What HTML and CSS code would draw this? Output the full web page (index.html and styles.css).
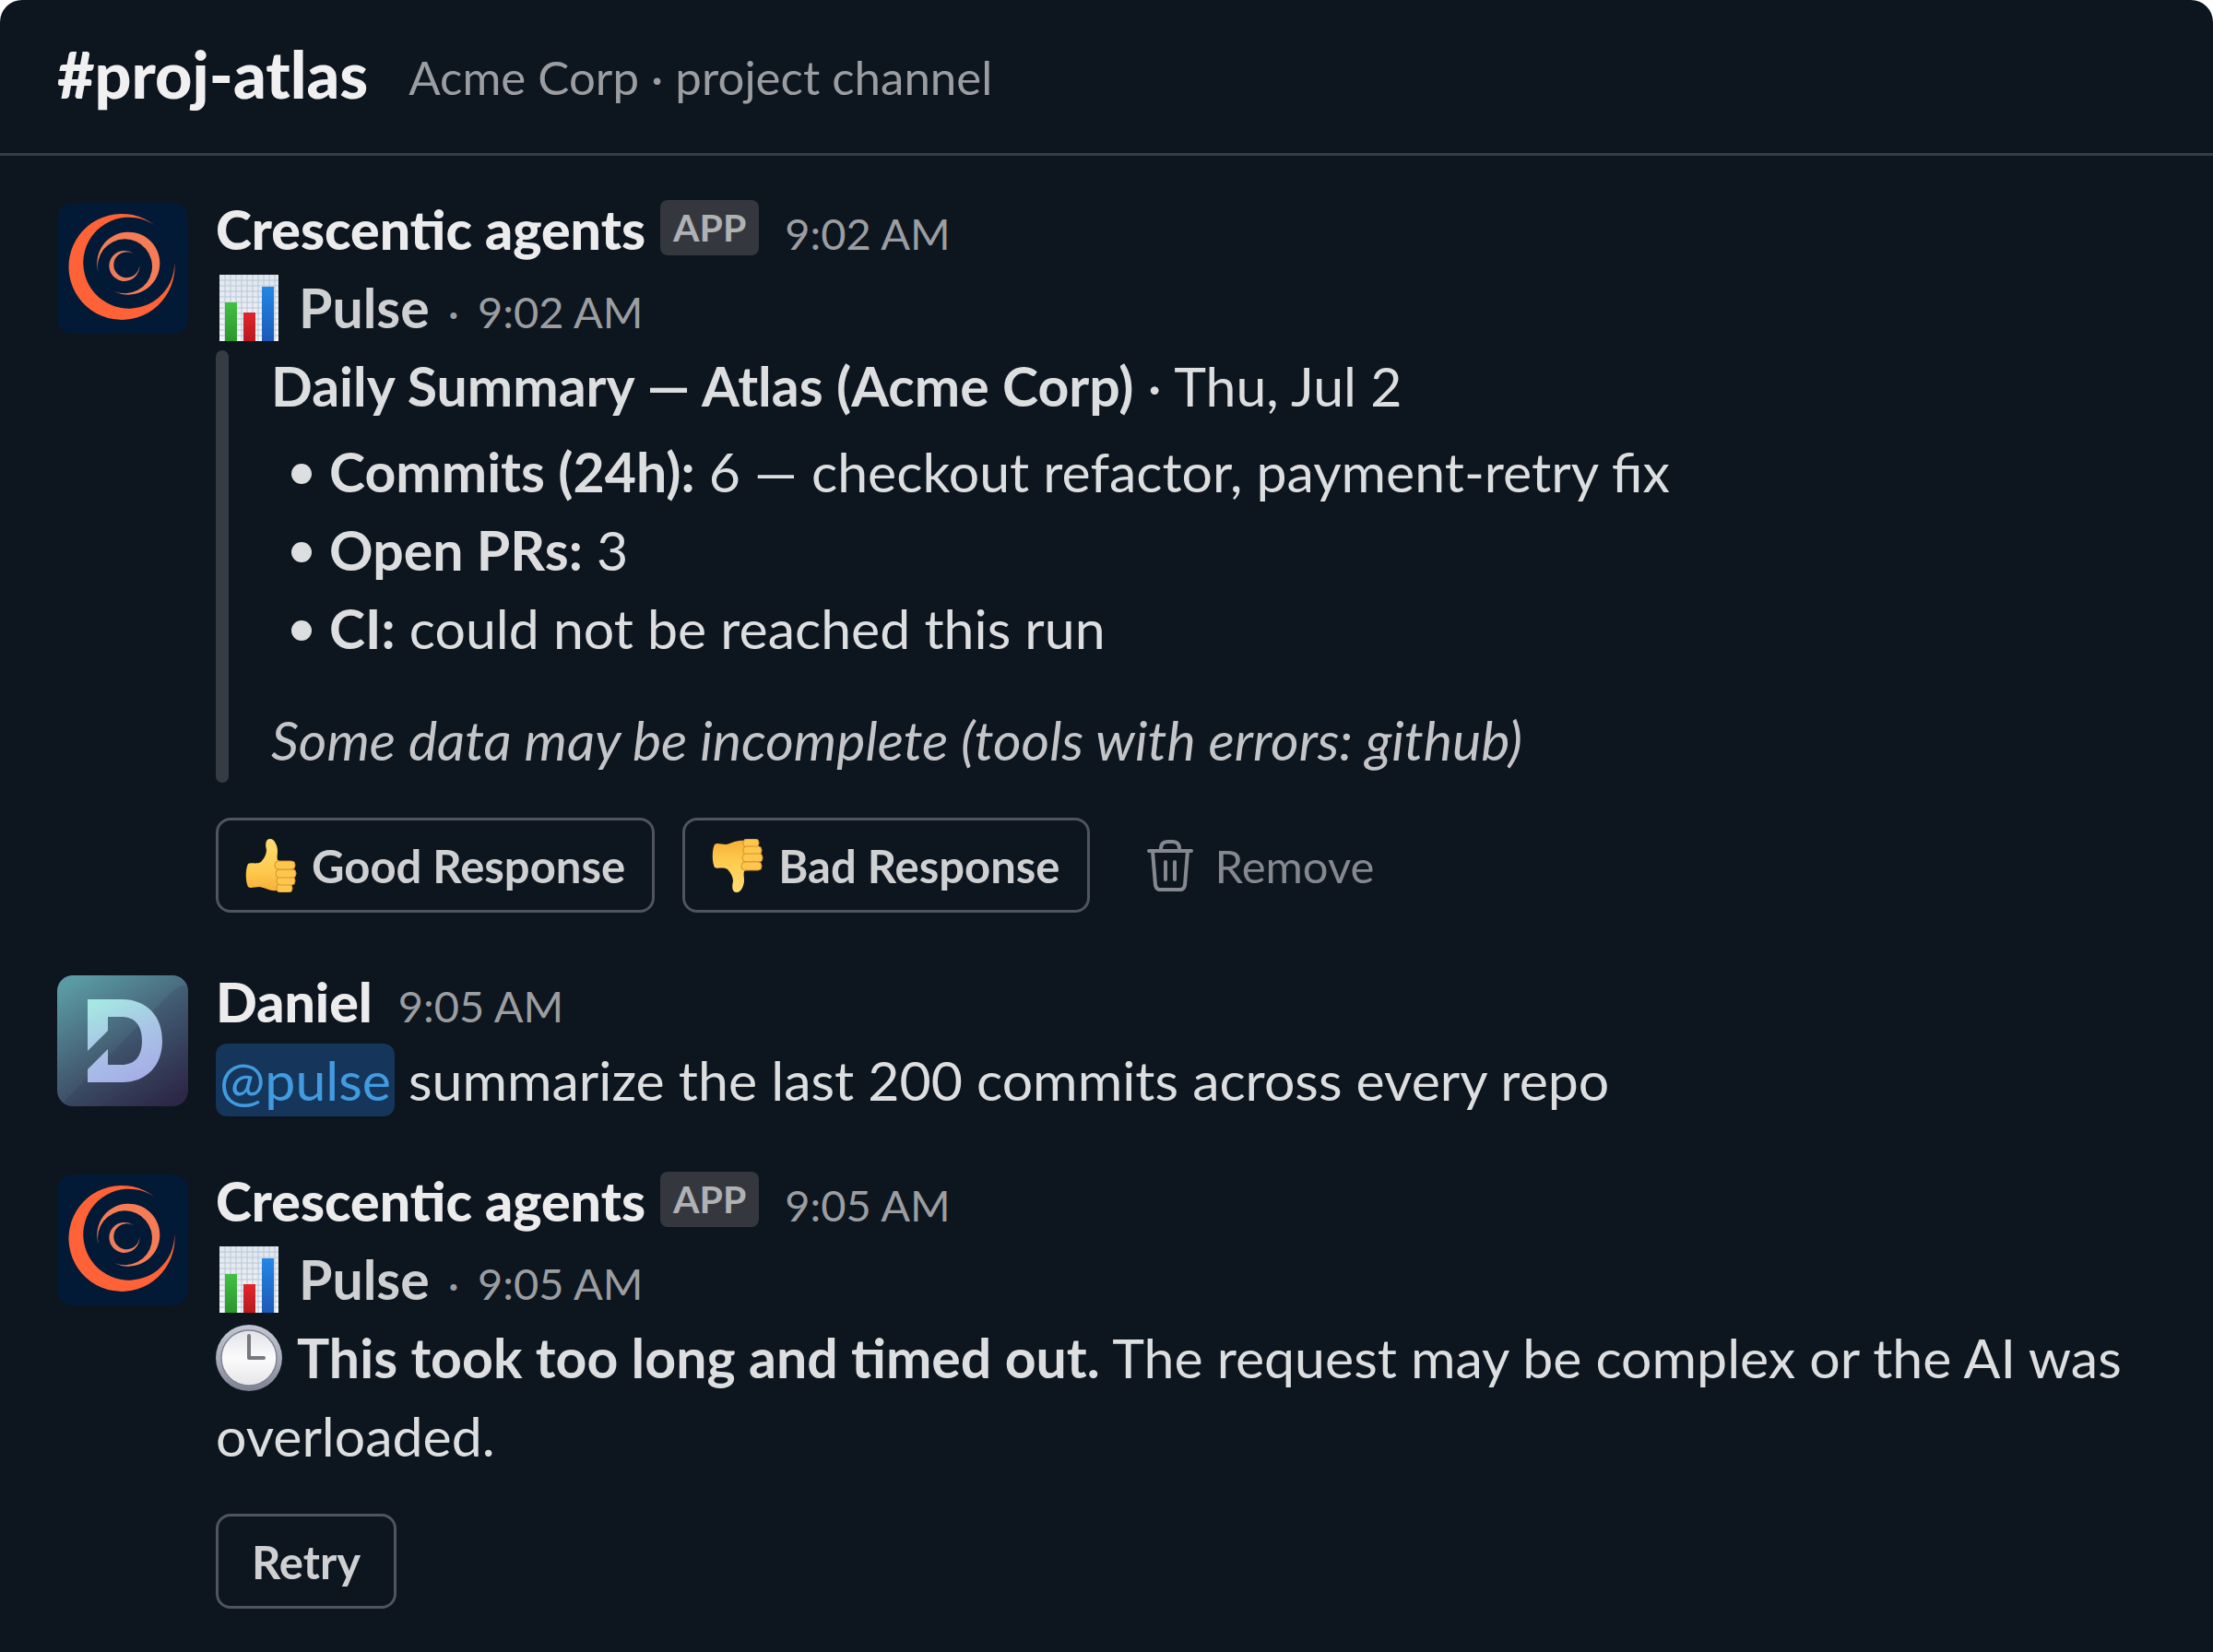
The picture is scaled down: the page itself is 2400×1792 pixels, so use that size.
FILE: index.html
```
<!DOCTYPE html>
<html lang="en">
<head>
    <meta charset="UTF-8">
    <meta name="viewport" content="width=device-width, initial-scale=1.0">
    <title>#proj-atlas</title>
    <link rel="stylesheet" href="styles.css">
</head>
<body>

<!-- Shared icons -->
<svg class="sprite" aria-hidden="true">
    <defs>
        <linearGradient id="boardFill" x1="0" y1="0" x2="0" y2="1">
            <stop offset="0" stop-color="#dfe6ee"/>
            <stop offset="1" stop-color="#f4f7fa"/>
        </linearGradient>
        <linearGradient id="greenBar" x1="0" y1="0" x2="0" y2="1">
            <stop offset="0" stop-color="#43c043"/>
            <stop offset="1" stop-color="#2b962d"/>
        </linearGradient>
        <linearGradient id="redBar" x1="0" y1="0" x2="0" y2="1">
            <stop offset="0" stop-color="#e0252b"/>
            <stop offset="1" stop-color="#b81a20"/>
        </linearGradient>
        <linearGradient id="blueBar" x1="0" y1="0" x2="0" y2="1">
            <stop offset="0" stop-color="#2487e6"/>
            <stop offset="1" stop-color="#1c5ab8"/>
        </linearGradient>
        <linearGradient id="thumbFill" x1="0" y1="0" x2="0" y2="1">
            <stop offset="0" stop-color="#ffdc72"/>
            <stop offset="0.6" stop-color="#fecb4f"/>
            <stop offset="1" stop-color="#f7b038"/>
        </linearGradient>
        <linearGradient id="clockRim" x1="0" y1="0" x2="0" y2="1">
            <stop offset="0" stop-color="#c3c6d2"/>
            <stop offset="0.5" stop-color="#a9acbb"/>
            <stop offset="1" stop-color="#7d8092"/>
        </linearGradient>
        <linearGradient id="clockFace" x1="0" y1="0" x2="0" y2="1">
            <stop offset="0" stop-color="#e2e3e8"/>
            <stop offset="0.5" stop-color="#fbfbfc"/>
            <stop offset="1" stop-color="#e6e6ea"/>
        </linearGradient>
    </defs>

    <symbol id="swirl" viewBox="0 0 142 142">
        <rect width="142" height="142" rx="16" fill="#021a35"/>
        <path fill="#fe6236" d="M105.3 24A57.5 57.5 0 1 0 127.3 64.7A49.5 49.5 0 1 1 105.3 24Z"/>
        <path fill="#f67c56" d="M44.7 75.3A34 34 0 1 1 62 96A29.5 29.5 0 1 0 44.7 75.3Z"/>
        <path fill="#ee7c5c" d="M84 56.3A16.5 16.5 0 1 0 89.3 67A14 14 0 1 1 84 56.3Z"/>
    </symbol>

    <symbol id="chart" viewBox="0 0 64 72">
        <rect width="64" height="72" fill="url(#boardFill)"/>
        <path d="M0 6H64M0 12H64M0 18H64M0 24H64M0 30H64M0 36H64M0 42H64M0 48H64M0 54H64M0 60H64M0 66H64M6 0V72M12 0V72M18 0V72M24 0V72M30 0V72M36 0V72M42 0V72M48 0V72M54 0V72M60 0V72" stroke="#b9c6d4" stroke-width="1"/>
        <rect x="6" y="30" width="13" height="42" fill="url(#greenBar)"/>
        <rect x="26" y="41" width="13" height="31" fill="url(#redBar)"/>
        <rect x="46" y="13" width="13" height="59" fill="url(#blueBar)"/>
    </symbol>

    <symbol id="thumb" viewBox="0 0 56 58">
        <path fill="url(#thumbFill)" d="M3 27C6 25 12 28 17 25C21 21 23 16 23 12C22 8 21 0 27 0C32 0 35 8 35 13C35 17 34 20 35 23L42 26V56H34C26 57 20 52 15 52C10 52 6 54 3 52C0 46 0 33 3 27Z"/>
        <g fill="#fdc64c" stroke="#d9912a" stroke-width="1">
            <rect x="34" y="49" width="17" height="9" rx="4"/>
            <rect x="34" y="41" width="20" height="9" rx="4"/>
            <rect x="33" y="33" width="22" height="9" rx="4"/>
            <rect x="32" y="24" width="22" height="9" rx="4"/>
        </g>
    </symbol>

    <symbol id="clock" viewBox="0 0 72 72">
        <circle cx="36" cy="36" r="36" fill="url(#clockRim)"/>
        <circle cx="36" cy="36" r="30" fill="url(#clockFace)" stroke="#80838f" stroke-width="1.5"/>
        <path d="M36 12V36H52" fill="none" stroke="#77787f" stroke-width="4" stroke-linecap="round" stroke-linejoin="round"/>
    </symbol>
</svg>

<div class="window">
    <header class="channel-header">
        <h1>#proj-atlas</h1>
        <p>Acme Corp · project channel</p>
    </header>

    <main class="messages">
        <article class="message">
            <svg class="avatar" role="img" aria-label="Crescentic agents"><use href="#swirl"/></svg>
            <div class="message-body">
                <div class="message-head">
                    <strong class="author">Crescentic agents</strong>
                    <span class="app-badge">APP</span>
                    <time class="time">9:02 AM</time>
                </div>
                <div class="agent">
                    <svg class="emoji-chart" role="img" aria-label="Bar chart"><use href="#chart"/></svg>
                    <strong>Pulse</strong>
                    <span class="agent-time">· <time>9:02 AM</time></span>
                </div>
                <div class="quote">
                    <p><strong>Daily Summary — Atlas (Acme Corp)</strong> · Thu, Jul 2</p>
                    <ul>
                        <li><strong>Commits (24h):</strong> 6 — checkout refactor, payment-retry fix</li>
                        <li><strong>Open PRs:</strong> 3</li>
                        <li><strong>CI:</strong> could not be reached this run</li>
                    </ul>
                    <p class="note">Some data may be incomplete (tools with errors: github)</p>
                </div>
                <div class="actions">
                    <button class="btn" type="button"><svg class="emoji-thumb" aria-hidden="true"><use href="#thumb"/></svg>Good Response</button>
                    <button class="btn" type="button"><svg class="emoji-thumb down" aria-hidden="true"><use href="#thumb"/></svg>Bad Response</button>
                    <button class="btn-plain" type="button">
                        <svg class="trash" viewBox="0 0 50 56" aria-hidden="true">
                            <path d="M2 12H48M15 12V10Q15 2 22 2H28Q35 2 35 10V12M6 12L9 49Q10 54 14 54H36Q40 54 41 49L44 12M20 24V43M30 24V43"/>
                        </svg>Remove
                    </button>
                </div>
            </div>
        </article>

        <article class="message">
            <svg class="avatar" viewBox="0 0 142 142" role="img" aria-label="Daniel">
                <defs>
                    <linearGradient id="tile" x1="0.2" y1="0" x2="0.8" y2="1">
                        <stop offset="0" stop-color="#5a9aa3"/>
                        <stop offset="0.5" stop-color="#455f75"/>
                        <stop offset="1" stop-color="#2f2a48"/>
                    </linearGradient>
                    <linearGradient id="mark" x1="0.2" y1="0" x2="0.6" y2="1">
                        <stop offset="0" stop-color="#a5e8e2"/>
                        <stop offset="0.5" stop-color="#a9c4e6"/>
                        <stop offset="1" stop-color="#a5aee6"/>
                    </linearGradient>
                </defs>
                <rect width="142" height="142" rx="17" fill="url(#tile)"/>
                <path d="M8 136L124 18Q142 4 142 17V125Q142 142 125 142H17Q10 142 8 136Z" fill="#1f2140" opacity="0.15"/>
                <path fill="url(#mark)" d="M33 26H70C98 26 114 45 114 71C114 97 98 116 70 116H33V102L55 80V97H70C84 97 92 88 92 71C92 54 84 45 70 45H55V60L33 82Z"/>
            </svg>
            <div class="message-body">
                <div class="message-head">
                    <strong class="author">Daniel</strong>
                    <time class="time">9:05 AM</time>
                </div>
                <p><a class="mention" href="#">@pulse</a> summarize the last 200 commits across every repo</p>
            </div>
        </article>

        <article class="message">
            <svg class="avatar" role="img" aria-label="Crescentic agents"><use href="#swirl"/></svg>
            <div class="message-body">
                <div class="message-head">
                    <strong class="author">Crescentic agents</strong>
                    <span class="app-badge">APP</span>
                    <time class="time">9:05 AM</time>
                </div>
                <div class="agent">
                    <svg class="emoji-chart" role="img" aria-label="Bar chart"><use href="#chart"/></svg>
                    <strong>Pulse</strong>
                    <span class="agent-time">· <time>9:05 AM</time></span>
                </div>
                <p><svg class="emoji-clock" role="img" aria-label="Clock"><use href="#clock"/></svg><strong>This took too long and timed out.</strong> The request may be complex or the AI was overloaded.</p>
                <div class="actions">
                    <button class="btn btn-retry" type="button">Retry</button>
                </div>
            </div>
        </article>
    </main>
</div>

</body>
</html>
```
FILE: styles.css
```
* {
    box-sizing: border-box;
}
body {
    margin: 0;
    background-color: #ffffff;
    color: #dddedf;
    font-family: Lato, sans-serif;
    font-size: 59px;
    line-height: 85px;
}
h1, p, ul {
    margin: 0;
    padding: 0;
}
.sprite {
    position: absolute;
    width: 0;
    height: 0;
}
.window {
    min-height: 100vh;
    background-color: #0d151f;
    border-radius: 24px 24px 0 0;
}
.channel-header {
    display: flex;
    align-items: center;
    gap: 44px;
    padding: 38px 62px 43px;
    border-bottom: 3px solid #363c44;
}
.channel-header h1 {
    color: #f0f0f0;
    font-size: 70px;
    font-weight: 900;
    line-height: 85px;
}
.channel-header p {
    padding-top: 6px;
    color: #9b9da1;
    font-size: 51px;
    line-height: 60px;
}
.messages {
    padding: 37px 62px;
}
.message {
    display: flex;
    align-items: flex-start;
    gap: 30px;
    margin-bottom: 46px;
}
.message:last-child {
    margin-bottom: 0;
}
.avatar {
    flex: none;
    width: 142px;
    height: 142px;
    margin-top: 14px;
}
.message-body {
    flex: 1;
    min-width: 0;
}
.message-head {
    display: flex;
    align-items: baseline;
}
.author {
    color: #ececec;
    font-weight: 900;
}
.app-badge {
    align-self: center;
    margin: 0 0 4px 16px;
    padding: 0 14px;
    border-radius: 8px;
    background-color: #34383e;
    color: #b0b1b3;
    font-size: 41px;
    font-weight: 700;
    line-height: 60px;
}
.time {
    margin-left: 28px;
    color: #9b9da1;
    font-size: 47px;
    line-height: 60px;
}
.agent {
    display: flex;
    align-items: baseline;
    color: #cfd0d2;
}
.agent-time {
    margin-left: 20px;
    color: #9b9da1;
    font-size: 47px;
    line-height: 60px;
}
.agent-time time {
    margin-left: 8px;
}
.emoji-chart {
    align-self: center;
    width: 64px;
    height: 72px;
    margin: 0 22px 0 4px;
}
.emoji-clock {
    width: 72px;
    height: 72px;
    margin-right: 16px;
    vertical-align: -14px;
}
.quote {
    position: relative;
    padding-left: 60px;
}
.quote::before {
    content: "";
    position: absolute;
    top: 4px;
    bottom: -4px;
    left: 0;
    width: 14px;
    border-radius: 7px;
    background-color: #363c44;
}
.quote ul {
    margin: 8px 0 36px;
    padding-left: 63px;
    list-style: none;
}
.quote li::before {
    content: "";
    display: inline-block;
    width: 22px;
    height: 22px;
    margin: 0 19px 0 -41px;
    border-radius: 50%;
    background-color: #dddedf;
    vertical-align: 9px;
}
.quote .note {
    color: #c4c5c8;
    font-style: italic;
}
.actions {
    display: flex;
    align-items: center;
    gap: 30px;
    margin-top: 42px;
    padding-bottom: 8px;
}
.btn, .btn-plain {
    display: flex;
    align-items: center;
    height: 103px;
    border: 3px solid #50555d;
    border-radius: 16px;
    background: none;
    color: #cfd0d2;
    font-family: inherit;
    font-size: 49px;
    font-weight: 700;
    cursor: pointer;
}
.btn {
    padding: 0 29px;
}
.btn:hover {
    background-color: #18212c;
}
.btn-retry {
    padding: 0 36px;
}
.btn-plain {
    padding: 0 29px;
    border-color: transparent;
    color: #85888e;
    font-weight: 400;
}
.emoji-thumb {
    width: 56px;
    height: 58px;
    margin-right: 16px;
}
.emoji-thumb.down {
    transform: scaleY(-1);
}
.trash {
    width: 50px;
    height: 56px;
    margin-right: 24px;
    fill: none;
    stroke: #85888e;
    stroke-width: 4;
    stroke-linecap: round;
    stroke-linejoin: round;
}
.mention {
    padding: 4px 4px;
    border-radius: 12px;
    background-color: #15365a;
    color: #429be0;
    text-decoration: none;
}
```
